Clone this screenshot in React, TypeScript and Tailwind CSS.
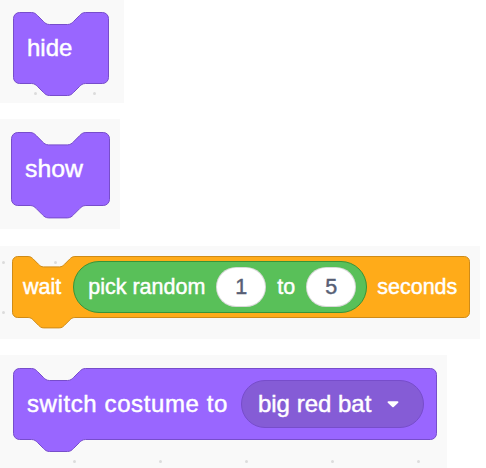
import type { ReactNode } from 'react'

const FONT = "font-['Liberation_Sans',Arial,sans-serif]"
// Helvetica Neue Medium look: thicken the regular face a little
const MEDIUM = '[-webkit-text-stroke:0.45px_currentColor]'

// Scratch-style stack block outline: rounded body, notch on top, tab below
function stackPath(w: number, h: number, s: number) {
  const r = 4 * s
  const n = (v: number) => (v * s).toFixed(2)
  const start = 12 * s
  return [
    `M0.5,${r + 0.5}`,
    `A${r},${r} 0 0 1 ${r + 0.5},0.5`,
    `H${start + 0.5}`,
    `c${n(2)},0 ${n(3)},${n(1)} ${n(4)},${n(2)}`,
    `l${n(4)},${n(4)}`,
    `c${n(1)},${n(1)} ${n(2)},${n(2)} ${n(4)},${n(2)}`,
    `h${n(12)}`,
    `c${n(2)},0 ${n(3)},${n(-1)} ${n(4)},${n(-2)}`,
    `l${n(4)},${n(-4)}`,
    `c${n(1)},${n(-1)} ${n(2)},${n(-2)} ${n(4)},${n(-2)}`,
    `H${w - r - 0.5}`,
    `A${r},${r} 0 0 1 ${w - 0.5},${r + 0.5}`,
    `V${h - r - 0.5}`,
    `A${r},${r} 0 0 1 ${w - r - 0.5},${h - 0.5}`,
    `H${start + 36 * s + 0.5}`,
    `c${n(-2)},0 ${n(-3)},${n(1)} ${n(-4)},${n(2)}`,
    `l${n(-4)},${n(4)}`,
    `c${n(-1)},${n(1)} ${n(-2)},${n(2)} ${n(-4)},${n(2)}`,
    `h${n(-12)}`,
    `c${n(-2)},0 ${n(-3)},${n(-1)} ${n(-4)},${n(-2)}`,
    `l${n(-4)},${n(-4)}`,
    `c${n(-1)},${n(-1)} ${n(-2)},${n(-2)} ${n(-4)},${n(-2)}`,
    `H${r + 0.5}`,
    `A${r},${r} 0 0 1 0.5,${h - r - 0.5}`,
    'Z',
  ].join(' ')
}

function StackBlock({
  w,
  h,
  s,
  fill,
  stroke,
  className,
  children,
}: {
  w: number
  h: number
  s: number
  fill: string
  stroke: string
  className: string
  children: ReactNode
}) {
  return (
    <div className="relative shrink-0" style={{ width: w, height: h }}>
      <svg
        className="absolute left-0 top-0 overflow-visible"
        width={w}
        height={h + 8 * s}
        aria-hidden="true"
      >
        <path d={stackPath(w, h, s)} fill={fill} stroke={stroke} strokeWidth={1} />
      </svg>
      <div className={`relative flex h-full items-center ${MEDIUM} ${className}`}>{children}</div>
    </div>
  )
}

function Dot({ x, y }: { x: number; y: number }) {
  return (
    <span
      className="absolute h-[3px] w-[3px] rounded-full bg-[#dcdcdc]"
      style={{ left: x - 1, top: y - 1 }}
    />
  )
}

function NumberInput({ value }: { value: string }) {
  return (
    <div className="flex h-[40px] w-[50px] items-center justify-center rounded-full border border-black/15 bg-white text-[21.5px] text-[#575e75]">
      {value}
    </div>
  )
}

export default function App() {
  return (
    <div className={`flex min-h-[468px] w-[486px] flex-col gap-4 bg-white text-white ${FONT}`}>
      {/* hide */}
      <div className="relative h-[103px] w-[124px] bg-[#f9f9f9] pl-[13px] pt-[12px]">
        <Dot x={35} y={93} />
        <Dot x={94} y={93} />
        <StackBlock w={96} h={72} s={1.5} fill="#9966ff" stroke="#774dcb" className="pl-[14px] text-[24px]">
          hide
        </StackBlock>
      </div>

      {/* show */}
      <div className="h-[110px] w-[120px] bg-[#f9f9f9] pl-[11px] pt-[13px]">
        <StackBlock w={99} h={74} s={1.55} fill="#9966ff" stroke="#774dcb" className="pl-[14px] text-[24.8px]">
          show
        </StackBlock>
      </div>

      {/* wait (pick random 1 to 5) seconds */}
      <div className="relative mt-px h-[93px] w-[480px] bg-[#f9f9f9] pl-[12px] pt-[10px]">
        <Dot x={3} y={16} />
        <Dot x={55} y={16} />
        <Dot x={3} y={66} />
        <StackBlock w={458} h={62} s={1.3} fill="#ffab19" stroke="#cf8b17" className="gap-[10px] pl-[11px] text-[21.5px]">
          <span className="mr-[2px]">wait</span>
          <div className="flex h-[52px] w-[294px] items-center gap-[11px] rounded-full border border-[#389438] bg-[#59c059] pl-[14px]">
            <span>pick random</span>
            <NumberInput value="1" />
            <span>to</span>
            <NumberInput value="5" />
          </div>
          <span>seconds</span>
        </StackBlock>
      </div>

      {/* switch costume to [big red bat] */}
      <div className="relative flex h-[113px] w-[447px] flex-col bg-[#f9f9f9] pl-[13px] pt-[13px]">
        <StackBlock w={424} h={72} s={1.5} fill="#9966ff" stroke="#774dcb" className="gap-[13px] pl-[14px] text-[24px]">
          <span className="tracking-[0.6px]">switch costume to</span>
          <div className="flex h-[48px] w-[183px] items-center gap-[16px] rounded-full border border-[#774dcb] bg-[#855cd6] pl-[16px]">
            <span>big red bat</span>
            <svg width="12" height="8" viewBox="0 0 12 8" aria-hidden="true">
              <path
                d="M1.5 1.2h9c.9 0 1.3 1 .7 1.6L6.7 6.9c-.4.4-1 .4-1.4 0L.8 2.8c-.6-.6-.2-1.6.7-1.6z"
                fill="white"
              />
            </svg>
          </div>
        </StackBlock>
        <div className="mt-auto mb-[5px] flex gap-[83px] pl-[60px]">
          {[0, 1, 2, 3, 4].map((i) => (
            <span key={i} className="h-[3px] w-[3px] rounded-full bg-[#dcdcdc]" />
          ))}
        </div>
      </div>
    </div>
  )
}
